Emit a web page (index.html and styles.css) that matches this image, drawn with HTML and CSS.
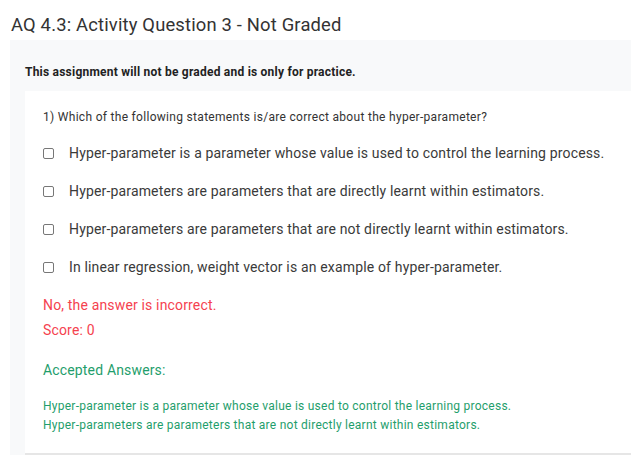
FILE: index.html
```html
<!DOCTYPE html>
<html>
<head>
<meta charset="utf-8">
<link rel="stylesheet" href="styles.css">
</head>
<body>
<div class="page">
  <h1 class="title">AQ 4.3: Activity Question 3 - Not Graded</h1>
  <div class="panel">
    <p class="notice">This assignment will not be graded and is only for practice.</p>
    <div class="card">
      <p class="question">1) Which of the following statements is/are correct about the hyper-parameter?</p>
      <ul class="options">
        <li class="option"><span class="box"></span><span>Hyper-parameter is a parameter whose value is used to control the learning process.</span></li>
        <li class="option"><span class="box"></span><span>Hyper-parameters are parameters that are directly learnt within estimators.</span></li>
        <li class="option"><span class="box"></span><span>Hyper-parameters are parameters that are not directly learnt within estimators.</span></li>
        <li class="option"><span class="box"></span><span>In linear regression, weight vector is an example of hyper-parameter.</span></li>
      </ul>
      <p class="wrong">No, the answer is incorrect.</p>
      <p class="score">Score: 0</p>
      <p class="accepted">Accepted Answers:</p>
      <div class="answers">
        <div>Hyper-parameter is a parameter whose value is used to control the learning process.</div>
        <div>Hyper-parameters are parameters that are not directly learnt within estimators.</div>
      </div>
    </div>
  </div>
</div>
</body>
</html>
```
FILE: styles.css
```css
html, body {
  margin: 0;
  padding: 0;
  background: #fff;
  font-family: Roboto, "Liberation Sans", sans-serif;
  color: #333;
}
.page {
  padding-left: 10px;
}
.title {
  margin: 0;
  padding: 13px 0 0 1px;
  height: 27px;
  font-size: 18.4px;
  letter-spacing: 0.17px;
  font-weight: 400;
  line-height: 24px;
  color: #333;
}
.panel {
  background: #f8f9fa;
  padding-left: 15px;
}
.notice {
  margin: 0;
  padding: 24px 0 0 0;
  height: 27px;
  font-size: 12px;
  letter-spacing: 0.22px;
  font-weight: 700;
  line-height: 16px;
  color: #222;
}
.card {
  background: #fff;
  padding: 17px 0 18px 18px;
  border-bottom: 2px solid #e6e6e6;
}
.question {
  margin: 0;
  font-size: 12px;
  letter-spacing: 0.3px;
  line-height: 18px;
  color: #333;
}
.options {
  list-style: none;
  margin: 8px 0 0 0;
  padding: 0;
}
.option {
  display: flex;
  align-items: center;
  height: 38px;
  font-size: 14px;
  letter-spacing: 0.16px;
  color: #3a3a3a;
}
.box {
  width: 9px;
  height: 9px;
  border: 1px solid #777;
  border-radius: 2px;
  margin-right: 15px;
  flex: none;
}
.wrong {
  margin: 10px 0 0 0;
  font-size: 14px;
  letter-spacing: 0.16px;
  line-height: 18px;
  color: #f5424f;
}
.score {
  margin: 7px 0 0 0;
  font-size: 14px;
  letter-spacing: 0.16px;
  line-height: 18px;
  color: #f5424f;
}
.accepted {
  margin: 22px 0 0 0;
  font-size: 14px;
  letter-spacing: 0.16px;
  line-height: 18px;
  color: #1f9e6c;
}
.answers {
  margin-top: 18px;
  font-size: 12px;
  letter-spacing: 0.25px;
  line-height: 19px;
  color: #1f9e6c;
}
```
